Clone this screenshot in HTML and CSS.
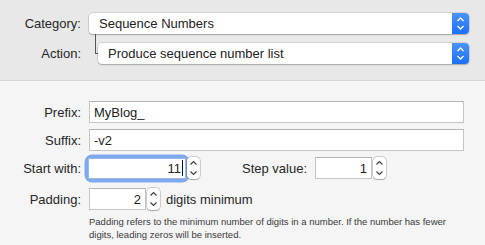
FILE: index.html
```html
<!DOCTYPE html>
<html lang="en">
<head>
    <meta charset="UTF-8">
    <title>Sequence Numbers</title>
    <link rel="stylesheet" href="styles.css">
</head>
<body>
    <div class="top">
        <div class="label">Category:</div>
        <div class="popup">
            <span class="popup-text">Sequence Numbers</span>
            <span class="popup-arrows">
                <svg width="17" height="21" viewBox="0 0 17 21"><path d="M5.5 8 L8.5 5 L11.5 8 M5.5 13 L8.5 16 L11.5 13" fill="none" stroke="#fff" stroke-width="1.4"/></svg>
            </span>
        </div>

        <div class="label">Action:</div>
        <div class="action-cell">
            <div class="connector"></div>
            <div class="popup">
                <span class="popup-text">Produce sequence number list</span>
                <span class="popup-arrows">
                    <svg width="17" height="21" viewBox="0 0 17 21"><path d="M5.5 8 L8.5 5 L11.5 8 M5.5 13 L8.5 16 L11.5 13" fill="none" stroke="#fff" stroke-width="1.4"/></svg>
                </span>
            </div>
        </div>
    </div>

    <div class="bottom">
        <div class="label">Prefix:</div>
        <div class="field wide">MyBlog_</div>

        <div class="label">Suffix:</div>
        <div class="field wide">-v2</div>

        <div class="label">Start with:</div>
        <div class="row">
            <div class="focus-ring">
                <div class="field num start">11<span class="caret"></span></div>
            </div>
            <div class="stepper">
                <svg width="13" height="22" viewBox="0 0 13 22"><path d="M3.5 7.5 L6.5 4.5 L9.5 7.5 M3.5 14.5 L6.5 17.5 L9.5 14.5" fill="none" stroke="#3a3a3a" stroke-width="1.1"/></svg>
            </div>
            <div class="label step-label">Step value:</div>
            <div class="field num small">1</div>
            <div class="stepper">
                <svg width="13" height="22" viewBox="0 0 13 22"><path d="M3.5 7.5 L6.5 4.5 L9.5 7.5 M3.5 14.5 L6.5 17.5 L9.5 14.5" fill="none" stroke="#3a3a3a" stroke-width="1.1"/></svg>
            </div>
        </div>

        <div class="label padded">Padding:</div>
        <div class="row padded">
            <div class="field num small">2</div>
            <div class="stepper">
                <svg width="13" height="22" viewBox="0 0 13 22"><path d="M3.5 7.5 L6.5 4.5 L9.5 7.5 M3.5 14.5 L6.5 17.5 L9.5 14.5" fill="none" stroke="#3a3a3a" stroke-width="1.1"/></svg>
            </div>
            <span class="suffix-text">digits minimum</span>
        </div>

        <div></div>
        <p class="help">Padding refers to the minimum number of digits in a number. If the number has fewer digits, leading zeros will be inserted.</p>
    </div>
</body>
</html>
```

FILE: styles.css
```css
* {
    margin: 0;
    padding: 0;
    box-sizing: border-box;
}

body {
    font-family: "Liberation Sans", Arial, sans-serif;
    font-size: 13px;
    color: #262626;
    background: #f5f5f5;
    width: 485px;
    height: 245px;
    overflow: hidden;
}

.top {
    background: #e8e8e8;
    border-bottom: 1px solid #d6d6d6;
    height: 81px;
    padding: 13px 16px 0 0;
    display: grid;
    grid-template-columns: 81px 1fr;
    column-gap: 8px;
    row-gap: 9px;
    align-content: start;
    align-items: center;
}

.label {
    text-align: right;
    white-space: nowrap;
}

.popup {
    flex: 1;
    height: 21px;
    background: #fff;
    border-radius: 4px;
    box-shadow: 0 0 0 0.5px rgba(0, 0, 0, 0.18), 0 1px 1.5px rgba(0, 0, 0, 0.22);
    display: flex;
    align-items: center;
}

.popup-text {
    flex: 1;
    padding-left: 10px;
    color: #222;
}

.popup-arrows {
    width: 17px;
    height: 21px;
    border-radius: 0 4px 4px 0;
    background: linear-gradient(#4a94fc, #1c6ffb);
    display: flex;
}

.action-cell {
    display: flex;
    align-items: center;
}

.connector {
    align-self: flex-start;
    margin: -9px 0 0 6px;
    width: 4px;
    height: 20px;
    border-left: 1px solid #555;
    border-bottom: 1px solid #555;
}

.action-cell .popup {
    margin-left: -1px;
}

.bottom {
    padding: 20px 21px 0 0;
    display: grid;
    grid-template-columns: 81px 1fr;
    column-gap: 8px;
    row-gap: 6px;
    align-items: center;
}

.field {
    height: 22px;
    background: #fff;
    border: 1px solid #c4c4c4;
    border-top-color: #b4b4b4;
    padding: 0 4px;
    display: flex;
    align-items: center;
    color: #222;
}

.row {
    display: flex;
    align-items: center;
}

.padded {
    margin-top: 3px;
}

.num {
    justify-content: flex-end;
}

.small {
    width: 57px;
}

.focus-ring {
    border-radius: 4px;
    box-shadow: 0 0 0 3.5px #7ea9ef;
    margin-left: -1px;
}

.start {
    width: 98px;
    height: 21px;
    border: 1px solid #9bb7e6;
    padding-right: 2px;
}

.caret {
    width: 1px;
    height: 16px;
    background: #111;
    margin-left: 1px;
}

.stepper {
    width: 13px;
    height: 22px;
    margin-left: 1px;
    background: #fff;
    border-radius: 4px;
    box-shadow: 0 0 0 0.5px rgba(0, 0, 0, 0.3), 0 0.5px 1px rgba(0, 0, 0, 0.2);
    display: flex;
}

.step-label {
    margin: 0 8px 0 42px;
}

.suffix-text {
    margin-left: 6px;
}

.help {
    margin-top: -1px;
    max-width: 362px;
    font-size: 9.5px;
    line-height: 13px;
    color: #3a3a3a;
}
```
